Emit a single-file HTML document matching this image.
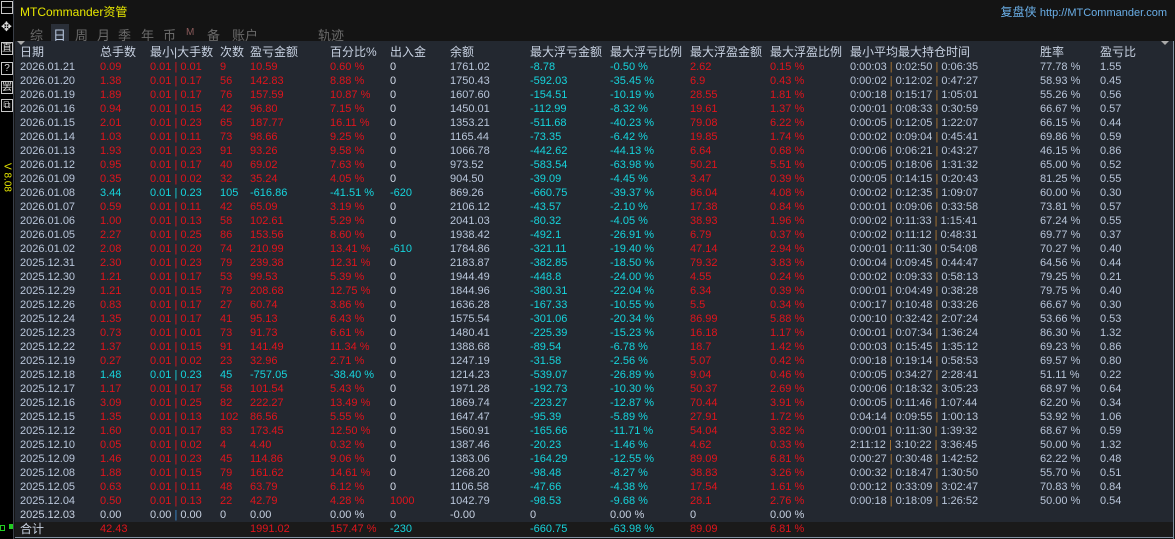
<!DOCTYPE html>
<html><head><meta charset="utf-8"><style>
*{margin:0;padding:0;box-sizing:border-box}
body{width:1175px;height:539px;background:#141414;overflow:hidden;position:relative;font-family:"Liberation Sans","Noto Sans CJK SC",sans-serif;font-size:11px;color:#b9c6da}
#lt{position:absolute;left:0;top:0;width:14px;height:539px;background:#000;border-right:1px solid #3a3f48}
.ic{position:absolute;left:1px;width:12px;height:13px;border:1px solid #c8c8c8;color:#ddd;font-size:10px;line-height:11px;text-align:center}
#ver{position:absolute;left:-10px;top:172px;transform:rotate(90deg);color:#e8e800;font-size:10px;width:34px;text-align:center}
#title{position:absolute;left:20px;top:3px;color:#e6e600;font-size:12px}
#site{position:absolute;right:8px;top:3px;color:#6aaee6;font-size:12px}
#site span{font-size:11px}
.tab{position:absolute;top:25px;color:#6a6a6a;font-size:13px}
#tabsel{position:absolute;left:51px;top:24px;width:18px;height:17px;background:#2a2f38}
#tbl{position:absolute;left:15px;top:41px;width:1158px;height:481px;background:#232830}
#rb{position:absolute;left:1173px;top:41px;width:1px;height:498px;background:#8090a0}
.r{position:absolute;left:0;height:14px;line-height:14px;width:1158px;white-space:nowrap}
.r>*{position:absolute;top:0;font-style:normal;font-weight:normal;text-decoration:none}
.r>*:nth-child(1){left:5px}.r>*:nth-child(2){left:85px}.r>*:nth-child(3){left:135px}.r>*:nth-child(4){left:205px}.r>*:nth-child(5){left:235px}.r>*:nth-child(6){left:315px}.r>*:nth-child(7){left:375px}.r>*:nth-child(8){left:435px}.r>*:nth-child(9){left:515px}.r>*:nth-child(10){left:595px}.r>*:nth-child(11){left:675px}.r>*:nth-child(12){left:755px}.r>*:nth-child(13){left:835px}.r>*:nth-child(14){left:1025px}.r>*:nth-child(15){left:1085px}
.r>*:nth-child(n+2):nth-child(-n+6){color:#e0141c}
.r>*:nth-child(7){color:#d2dae8}
.r>*:nth-child(9),.r>*:nth-child(10){color:#16d4dc}
.r>*:nth-child(11),.r>*:nth-child(12){color:#e0141c}
.r.n>*:nth-child(n+2):nth-child(-n+6){color:#16d4dc}
.r.z>*{color:#c8d2e2!important}
.r>.c{color:#16d4dc!important}.r>.rd{color:#e0141c!important}
.hd{font-size:12px;color:#c8d2e2}
.hd>*{color:#c8d2e2!important}
u{text-decoration:none;color:#b07830}
#tot{position:absolute;left:15px;top:522px;width:1158px;height:15px;background:#1a1a1a}
#bl{position:absolute;left:15px;top:537px;width:1159px;height:1px;background:#8090a0}
</style></head><body>
<div id="lt">
<div class="ic" style="top:1px">—</div>
<div style="position:absolute;left:1px;top:19px;color:#ddd;font-size:13px">✥</div>
<div class="ic" style="top:42px">直</div>
<div class="ic" style="top:62px">?</div>
<div class="ic" style="top:81px">罢</div>
<div class="ic" style="top:99px">⧉</div>
<div id="ver">V 8.08</div>
<div style="position:absolute;left:0;top:525px;width:5px;height:6px;border:1px solid #2c2"></div>
<div style="position:absolute;left:9px;top:524px;width:4px;height:5px;background:#2c2"></div>
</div>
<div id="title">MTCommander资管</div>
<div id="site">复盘侠 <span>http://MTCommander.com</span></div>
<div id="tabsel"></div>
<div class="tab" style="left:30px">综</div><div class="tab" style="left:53px;color:#b8c8e0">日</div><div class="tab" style="left:75px">周</div><div class="tab" style="left:97px">月</div><div class="tab" style="left:118px">季</div><div class="tab" style="left:141px">年</div><div class="tab" style="left:163px">币</div><div class="tab" style="left:186px;font-size:10px;top:27px;color:#8a5a5a">M</div><div class="tab" style="left:207px">备</div><div class="tab" style="left:232px">账户</div><div class="tab" style="left:318px">轨迹</div>
<div id="tbl">
<div style="position:absolute;left:2px;top:0;width:0;height:0;border-left:4px solid transparent;border-right:4px solid transparent;border-top:4px solid #aaa"></div>
<div style="position:absolute;right:4px;top:0;width:0;height:0;border-left:4px solid transparent;border-right:4px solid transparent;border-top:4px solid #aaa"></div>
<div class="r hd" style="top:4px"><i>日期</i><i>总手数</i><i>最小|大手数</i><i>次数</i><i>盈亏金额</i><i>百分比%</i><i>出入金</i><i>余额</i><i>最大浮亏金额</i><i>最大浮亏比例</i><i>最大浮盈金额</i><i>最大浮盈比例</i><i>最小平均最大持仓时间</i><i>胜率</i><i>盈亏比</i></div>
<div class="r" style="top:19px"><i>2026.01.21</i><i>0.09</i><i>0.01 | 0.01</i><i>9</i><i>10.59</i><i>0.60 %</i><i>0</i><i>1761.02</i><i>-8.78</i><i>-0.50 %</i><i>2.62</i><i>0.15 %</i><i>0:00:03 <u>|</u> 0:02:50 <u>|</u> 0:06:35</i><i>77.78 %</i><i>1.55</i></div>
<div class="r" style="top:33px"><i>2026.01.20</i><i>1.38</i><i>0.01 | 0.17</i><i>56</i><i>142.83</i><i>8.88 %</i><i>0</i><i>1750.43</i><i>-592.03</i><i>-35.45 %</i><i>6.9</i><i>0.43 %</i><i>0:00:02 <u>|</u> 0:12:02 <u>|</u> 0:47:27</i><i>58.93 %</i><i>0.45</i></div>
<div class="r" style="top:47px"><i>2026.01.19</i><i>1.89</i><i>0.01 | 0.17</i><i>76</i><i>157.59</i><i>10.87 %</i><i>0</i><i>1607.60</i><i>-154.51</i><i>-10.19 %</i><i>28.55</i><i>1.81 %</i><i>0:00:18 <u>|</u> 0:15:17 <u>|</u> 1:05:01</i><i>55.26 %</i><i>0.56</i></div>
<div class="r" style="top:61px"><i>2026.01.16</i><i>0.94</i><i>0.01 | 0.15</i><i>42</i><i>96.80</i><i>7.15 %</i><i>0</i><i>1450.01</i><i>-112.99</i><i>-8.32 %</i><i>19.61</i><i>1.37 %</i><i>0:00:01 <u>|</u> 0:08:33 <u>|</u> 0:30:59</i><i>66.67 %</i><i>0.57</i></div>
<div class="r" style="top:75px"><i>2026.01.15</i><i>2.01</i><i>0.01 | 0.23</i><i>65</i><i>187.77</i><i>16.11 %</i><i>0</i><i>1353.21</i><i>-511.68</i><i>-40.23 %</i><i>79.08</i><i>6.22 %</i><i>0:00:05 <u>|</u> 0:12:05 <u>|</u> 1:22:07</i><i>66.15 %</i><i>0.44</i></div>
<div class="r" style="top:89px"><i>2026.01.14</i><i>1.03</i><i>0.01 | 0.11</i><i>73</i><i>98.66</i><i>9.25 %</i><i>0</i><i>1165.44</i><i>-73.35</i><i>-6.42 %</i><i>19.85</i><i>1.74 %</i><i>0:00:02 <u>|</u> 0:09:04 <u>|</u> 0:45:41</i><i>69.86 %</i><i>0.59</i></div>
<div class="r" style="top:103px"><i>2026.01.13</i><i>1.93</i><i>0.01 | 0.23</i><i>91</i><i>93.26</i><i>9.58 %</i><i>0</i><i>1066.78</i><i>-442.62</i><i>-44.13 %</i><i>6.64</i><i>0.68 %</i><i>0:00:06 <u>|</u> 0:06:21 <u>|</u> 0:43:27</i><i>46.15 %</i><i>0.86</i></div>
<div class="r" style="top:117px"><i>2026.01.12</i><i>0.95</i><i>0.01 | 0.17</i><i>40</i><i>69.02</i><i>7.63 %</i><i>0</i><i>973.52</i><i>-583.54</i><i>-63.98 %</i><i>50.21</i><i>5.51 %</i><i>0:00:05 <u>|</u> 0:18:06 <u>|</u> 1:31:32</i><i>65.00 %</i><i>0.52</i></div>
<div class="r" style="top:131px"><i>2026.01.09</i><i>0.35</i><i>0.01 | 0.02</i><i>32</i><i>35.24</i><i>4.05 %</i><i>0</i><i>904.50</i><i>-39.09</i><i>-4.45 %</i><i>3.47</i><i>0.39 %</i><i>0:00:05 <u>|</u> 0:14:15 <u>|</u> 0:20:43</i><i>81.25 %</i><i>0.55</i></div>
<div class="r n" style="top:145px"><i>2026.01.08</i><i>3.44</i><i>0.01 | 0.23</i><i>105</i><i>-616.86</i><i>-41.51 %</i><i class="c">-620</i><i>869.26</i><i>-660.75</i><i>-39.37 %</i><i>86.04</i><i>4.08 %</i><i>0:00:02 <u>|</u> 0:12:35 <u>|</u> 1:09:07</i><i>60.00 %</i><i>0.30</i></div>
<div class="r" style="top:159px"><i>2026.01.07</i><i>0.59</i><i>0.01 | 0.11</i><i>42</i><i>65.09</i><i>3.19 %</i><i>0</i><i>2106.12</i><i>-43.57</i><i>-2.10 %</i><i>17.38</i><i>0.84 %</i><i>0:00:01 <u>|</u> 0:09:06 <u>|</u> 0:33:58</i><i>73.81 %</i><i>0.57</i></div>
<div class="r" style="top:173px"><i>2026.01.06</i><i>1.00</i><i>0.01 | 0.13</i><i>58</i><i>102.61</i><i>5.29 %</i><i>0</i><i>2041.03</i><i>-80.32</i><i>-4.05 %</i><i>38.93</i><i>1.96 %</i><i>0:00:02 <u>|</u> 0:11:33 <u>|</u> 1:15:41</i><i>67.24 %</i><i>0.55</i></div>
<div class="r" style="top:187px"><i>2026.01.05</i><i>2.27</i><i>0.01 | 0.25</i><i>86</i><i>153.56</i><i>8.60 %</i><i>0</i><i>1938.42</i><i>-492.1</i><i>-26.91 %</i><i>6.79</i><i>0.37 %</i><i>0:00:02 <u>|</u> 0:11:12 <u>|</u> 0:48:31</i><i>69.77 %</i><i>0.37</i></div>
<div class="r" style="top:201px"><i>2026.01.02</i><i>2.08</i><i>0.01 | 0.20</i><i>74</i><i>210.99</i><i>13.41 %</i><i class="c">-610</i><i>1784.86</i><i>-321.11</i><i>-19.40 %</i><i>47.14</i><i>2.94 %</i><i>0:00:01 <u>|</u> 0:11:30 <u>|</u> 0:54:08</i><i>70.27 %</i><i>0.40</i></div>
<div class="r" style="top:215px"><i>2025.12.31</i><i>2.30</i><i>0.01 | 0.23</i><i>79</i><i>239.38</i><i>12.31 %</i><i>0</i><i>2183.87</i><i>-382.85</i><i>-18.50 %</i><i>79.32</i><i>3.83 %</i><i>0:00:04 <u>|</u> 0:09:45 <u>|</u> 0:44:47</i><i>64.56 %</i><i>0.44</i></div>
<div class="r" style="top:229px"><i>2025.12.30</i><i>1.21</i><i>0.01 | 0.17</i><i>53</i><i>99.53</i><i>5.39 %</i><i>0</i><i>1944.49</i><i>-448.8</i><i>-24.00 %</i><i>4.55</i><i>0.24 %</i><i>0:00:02 <u>|</u> 0:09:33 <u>|</u> 0:58:13</i><i>79.25 %</i><i>0.21</i></div>
<div class="r" style="top:243px"><i>2025.12.29</i><i>1.21</i><i>0.01 | 0.15</i><i>79</i><i>208.68</i><i>12.75 %</i><i>0</i><i>1844.96</i><i>-380.31</i><i>-22.04 %</i><i>6.34</i><i>0.39 %</i><i>0:00:01 <u>|</u> 0:04:49 <u>|</u> 0:38:28</i><i>79.75 %</i><i>0.40</i></div>
<div class="r" style="top:257px"><i>2025.12.26</i><i>0.83</i><i>0.01 | 0.17</i><i>27</i><i>60.74</i><i>3.86 %</i><i>0</i><i>1636.28</i><i>-167.33</i><i>-10.55 %</i><i>5.5</i><i>0.34 %</i><i>0:00:17 <u>|</u> 0:10:48 <u>|</u> 0:33:26</i><i>66.67 %</i><i>0.30</i></div>
<div class="r" style="top:271px"><i>2025.12.24</i><i>1.35</i><i>0.01 | 0.17</i><i>41</i><i>95.13</i><i>6.43 %</i><i>0</i><i>1575.54</i><i>-301.06</i><i>-20.34 %</i><i>86.99</i><i>5.88 %</i><i>0:00:10 <u>|</u> 0:32:42 <u>|</u> 2:07:24</i><i>53.66 %</i><i>0.53</i></div>
<div class="r" style="top:285px"><i>2025.12.23</i><i>0.73</i><i>0.01 | 0.01</i><i>73</i><i>91.73</i><i>6.61 %</i><i>0</i><i>1480.41</i><i>-225.39</i><i>-15.23 %</i><i>16.18</i><i>1.17 %</i><i>0:00:01 <u>|</u> 0:07:34 <u>|</u> 1:36:24</i><i>86.30 %</i><i>1.32</i></div>
<div class="r" style="top:299px"><i>2025.12.22</i><i>1.37</i><i>0.01 | 0.15</i><i>91</i><i>141.49</i><i>11.34 %</i><i>0</i><i>1388.68</i><i>-89.54</i><i>-6.78 %</i><i>18.7</i><i>1.42 %</i><i>0:00:03 <u>|</u> 0:15:45 <u>|</u> 1:35:12</i><i>69.23 %</i><i>0.86</i></div>
<div class="r" style="top:313px"><i>2025.12.19</i><i>0.27</i><i>0.01 | 0.02</i><i>23</i><i>32.96</i><i>2.71 %</i><i>0</i><i>1247.19</i><i>-31.58</i><i>-2.56 %</i><i>5.07</i><i>0.42 %</i><i>0:00:18 <u>|</u> 0:19:14 <u>|</u> 0:58:53</i><i>69.57 %</i><i>0.80</i></div>
<div class="r n" style="top:327px"><i>2025.12.18</i><i>1.48</i><i>0.01 | 0.23</i><i>45</i><i>-757.05</i><i>-38.40 %</i><i>0</i><i>1214.23</i><i>-539.07</i><i>-26.89 %</i><i>9.04</i><i>0.46 %</i><i>0:00:05 <u>|</u> 0:34:27 <u>|</u> 2:28:41</i><i>51.11 %</i><i>0.22</i></div>
<div class="r" style="top:341px"><i>2025.12.17</i><i>1.17</i><i>0.01 | 0.17</i><i>58</i><i>101.54</i><i>5.43 %</i><i>0</i><i>1971.28</i><i>-192.73</i><i>-10.30 %</i><i>50.37</i><i>2.69 %</i><i>0:00:06 <u>|</u> 0:18:32 <u>|</u> 3:05:23</i><i>68.97 %</i><i>0.64</i></div>
<div class="r" style="top:355px"><i>2025.12.16</i><i>3.09</i><i>0.01 | 0.25</i><i>82</i><i>222.27</i><i>13.49 %</i><i>0</i><i>1869.74</i><i>-223.27</i><i>-12.87 %</i><i>70.44</i><i>3.91 %</i><i>0:00:05 <u>|</u> 0:11:46 <u>|</u> 1:07:44</i><i>62.20 %</i><i>0.34</i></div>
<div class="r" style="top:369px"><i>2025.12.15</i><i>1.35</i><i>0.01 | 0.13</i><i>102</i><i>86.56</i><i>5.55 %</i><i>0</i><i>1647.47</i><i>-95.39</i><i>-5.89 %</i><i>27.91</i><i>1.72 %</i><i>0:04:14 <u>|</u> 0:09:55 <u>|</u> 1:00:13</i><i>53.92 %</i><i>1.06</i></div>
<div class="r" style="top:383px"><i>2025.12.12</i><i>1.60</i><i>0.01 | 0.17</i><i>83</i><i>173.45</i><i>12.50 %</i><i>0</i><i>1560.91</i><i>-165.66</i><i>-11.71 %</i><i>54.04</i><i>3.82 %</i><i>0:00:01 <u>|</u> 0:11:30 <u>|</u> 1:39:32</i><i>68.67 %</i><i>0.59</i></div>
<div class="r" style="top:397px"><i>2025.12.10</i><i>0.05</i><i>0.01 | 0.02</i><i>4</i><i>4.40</i><i>0.32 %</i><i>0</i><i>1387.46</i><i>-20.23</i><i>-1.46 %</i><i>4.62</i><i>0.33 %</i><i>2:11:12 <u>|</u> 3:10:22 <u>|</u> 3:36:45</i><i>50.00 %</i><i>1.32</i></div>
<div class="r" style="top:411px"><i>2025.12.09</i><i>1.46</i><i>0.01 | 0.23</i><i>45</i><i>114.86</i><i>9.06 %</i><i>0</i><i>1383.06</i><i>-164.29</i><i>-12.55 %</i><i>89.09</i><i>6.81 %</i><i>0:00:27 <u>|</u> 0:30:48 <u>|</u> 1:42:52</i><i>62.22 %</i><i>0.48</i></div>
<div class="r" style="top:425px"><i>2025.12.08</i><i>1.88</i><i>0.01 | 0.15</i><i>79</i><i>161.62</i><i>14.61 %</i><i>0</i><i>1268.20</i><i>-98.48</i><i>-8.27 %</i><i>38.83</i><i>3.26 %</i><i>0:00:32 <u>|</u> 0:18:47 <u>|</u> 1:30:50</i><i>55.70 %</i><i>0.51</i></div>
<div class="r" style="top:439px"><i>2025.12.05</i><i>0.63</i><i>0.01 | 0.11</i><i>48</i><i>63.79</i><i>6.12 %</i><i>0</i><i>1106.58</i><i>-47.66</i><i>-4.38 %</i><i>17.54</i><i>1.61 %</i><i>0:00:12 <u>|</u> 0:33:09 <u>|</u> 3:02:47</i><i>70.83 %</i><i>0.84</i></div>
<div class="r" style="top:453px"><i>2025.12.04</i><i>0.50</i><i>0.01 | 0.13</i><i>22</i><i>42.79</i><i>4.28 %</i><i class="rd">1000</i><i>1042.79</i><i>-98.53</i><i>-9.68 %</i><i>28.1</i><i>2.76 %</i><i>0:00:18 <u>|</u> 0:18:09 <u>|</u> 1:26:52</i><i>50.00 %</i><i>0.54</i></div>
<div class="r z" style="top:467px"><i>2025.12.03</i><i>0.00</i><i>0.00 <span style="color:#3a8ad0">|</span> 0.00</i><i>0</i><i>0.00</i><i>0.00 %</i><i>0</i><i>-0.00</i><i>0</i><i>0.00 %</i><i>0</i><i>0.00 %</i><i></i><i></i><i></i></div>
</div>
<div id="tot"><div class="r" style="top:0;font-size:11px"><i style="font-size:12px;color:#c8d2e2">合计</i><i>42.43</i><i></i><i></i><i>1991.02</i><i>157.47 %</i><i class="c">-230</i><i></i><i>-660.75</i><i>-63.98 %</i><i>89.09</i><i>6.81 %</i><i></i><i></i><i></i></div></div>
<div id="rb"></div><div id="bl"></div>
</body></html>
